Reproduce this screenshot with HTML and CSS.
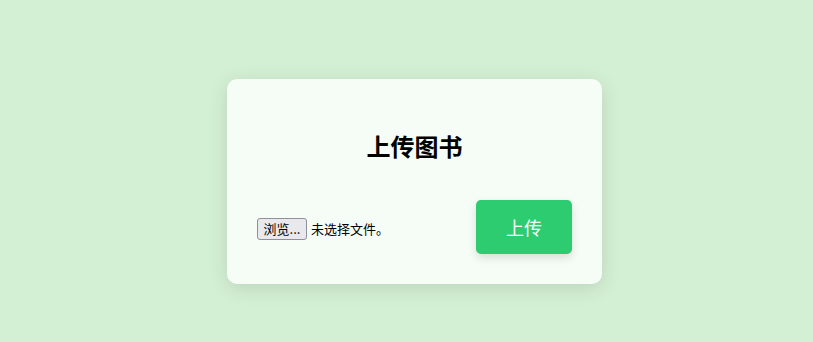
FILE: index.html
```html
<!DOCTYPE html>
<html lang="zh-CN">
<head>
<meta charset="utf-8">
<title>上传图书</title>
<link rel="stylesheet" href="styles.css">
</head>
<body>
<div class="card">
  <h2 class="title">上传图书</h2>
  <form class="row">
    <label class="file">
      <span class="file-btn">浏览...</span>
      <span class="file-name">未选择文件。</span>
    </label>
    <button type="button" class="upload">上传</button>
  </form>
</div>
</body>
</html>
```
FILE: styles.css
```css
html, body {
  margin: 0;
  padding: 0;
}
body {
  background: #d4f0d4;
  font-family: "Noto Sans CJK SC", "Noto Sans", sans-serif;
  display: flex;
  justify-content: center;
  padding: 79px 0 0 16px;
  height: 342px;
  box-sizing: border-box;
}
.card {
  width: 375px;
  height: 205px;
  box-sizing: border-box;
  background: #f5fdf6;
  border-radius: 10px;
  box-shadow: 0 4px 20px rgba(0, 0, 0, 0.12);
  padding: 0 30px;
  display: flex;
  flex-direction: column;
}
.title {
  margin: 49px 0 0;
  font-size: 24px;
  line-height: 36px;
  font-weight: 700;
  text-align: center;
  color: #000;
}
.row {
  margin-top: 36px;
  display: flex;
  align-items: center;
  justify-content: space-between;
}
.file {
  display: flex;
  align-items: center;
  margin-top: 3px;
  font-size: 13px;
  color: #000;
}
.file-btn {
  display: inline-flex;
  align-items: center;
  justify-content: center;
  box-sizing: border-box;
  width: 50px;
  height: 22px;
  background: #e9e9ed;
  border: 1px solid #8f8f9d;
  border-radius: 3px;
  font-size: 13px;
  line-height: 1;
}
.file-name {
  margin-left: 4px;
}
.upload {
  width: 96px;
  height: 54px;
  border: none;
  border-radius: 5px;
  background: #2ecc71;
  color: #fff;
  font-family: inherit;
  font-size: 18px;
  box-shadow: 0 4px 8px rgba(0, 0, 0, 0.12);
  cursor: pointer;
}
```
